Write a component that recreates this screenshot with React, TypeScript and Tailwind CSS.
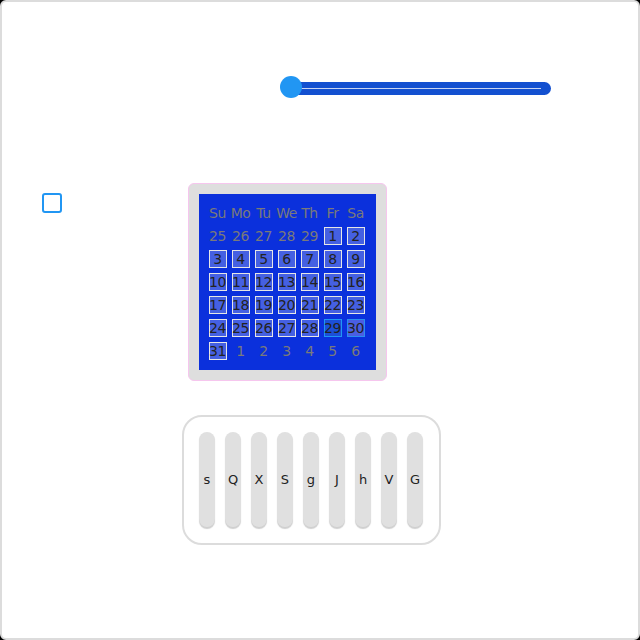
import React from 'react';

const heads = ['Su', 'Mo', 'Tu', 'We', 'Th', 'Fr', 'Sa'];

type Day = { n: number; cur: boolean; sel?: 'a' | 'b' };

const days: Day[] = [
    ...[25, 26, 27, 28, 29].map((n) => ({ n, cur: false })),
    ...Array.from({ length: 31 }, (_, i) => ({
        n: i + 1,
        cur: true,
        sel: i + 1 === 29 ? ('a' as const) : i + 1 === 30 ? ('b' as const) : undefined,
    })),
    ...[1, 2, 3, 4, 5, 6].map((n) => ({ n, cur: false })),
];

const keys = ['s', 'Q', 'X', 'S', 'g', 'J', 'h', 'V', 'G'];

const DayCell: React.FC<{ d: Day }> = ({ d }) => {
    if (!d.cur) {
        return (
            <div className="w-[23px] h-[23px] flex items-center justify-center text-[#7a7a7a]">{d.n}</div>
        );
    }
    const box =
        d.sel === 'a'
            ? 'border-[#2196f3] bg-[#1b4fd8]'
            : d.sel === 'b'
            ? 'border-[#2b8ef0] bg-[#4a5ee2]'
            : 'border-[#e6e6e6] bg-[#4560e2]';
    return (
        <div className="w-[23px] h-[23px] flex items-center justify-center">
            <div className={`w-[18px] h-[18px] border flex items-center justify-center text-[#222] ${box}`}>
                <span className="whitespace-nowrap">{d.n}</span>
            </div>
        </div>
    );
};

const App: React.FC = () => {
    return (
        <div className="w-[640px] h-[640px] bg-black" style={{ fontFamily: '"DejaVu Sans", sans-serif' }}>
            <div className="w-full h-full bg-white border-2 border-[#dcdcdc] rounded-[6px]">
                {/* slider */}
                <div className="pt-[74px] pl-[278px]">
                    <div className="relative w-[271px] h-[24px] flex items-center">
                        <div className="ml-[4px] w-[267px] h-[13px] rounded-full bg-[#1350d0] flex items-center px-[10px]">
                            <div className="w-full h-px bg-[#c7d4f2]"></div>
                        </div>
                        <div className="absolute left-0 top-0 w-[22px] h-[22px] rounded-full bg-[#2196f3]"></div>
                    </div>
                </div>

                {/* checkbox + calendar */}
                <div className="flex items-start mt-[83px]">
                    <div className="ml-[40px] mt-[10px] w-[20px] h-[20px] border-2 border-[#2196f3] rounded-[3px]"></div>
                    <div className="ml-[126px] w-[199px] p-[10px] bg-[#dedede] border border-[#f6c6ee] rounded-[6px]">
                        <div className="bg-[#0b30dc] pl-[7px] pr-[9px] pt-[7px] pb-[8px] grid grid-cols-7 text-[14px] leading-none tracking-[-0.5px]">
                            {heads.map((h) => (
                                <div key={h} className="w-[23px] h-[23px] flex items-center justify-center text-[#7a7a7a]">
                                    {h}
                                </div>
                            ))}
                            {days.map((d, i) => (
                                <DayCell key={i} d={d} />
                            ))}
                        </div>
                    </div>
                </div>

                {/* keys */}
                <div className="mt-[34px] ml-[180px] w-[259px] h-[130px] border-2 border-[#dcdcdc] rounded-[20px] px-[15px] pt-[15px] flex gap-[10px]">
                    {keys.map((k) => (
                        <div
                            key={k}
                            className="w-[16px] h-[95px] rounded-full bg-[#e0e0e0] shadow-[0_2px_1px_#cfcfcf] flex items-center justify-center text-[13px] text-[#222]"
                        >
                            {k}
                        </div>
                    ))}
                </div>
            </div>
        </div>
    );
};

export default App;
